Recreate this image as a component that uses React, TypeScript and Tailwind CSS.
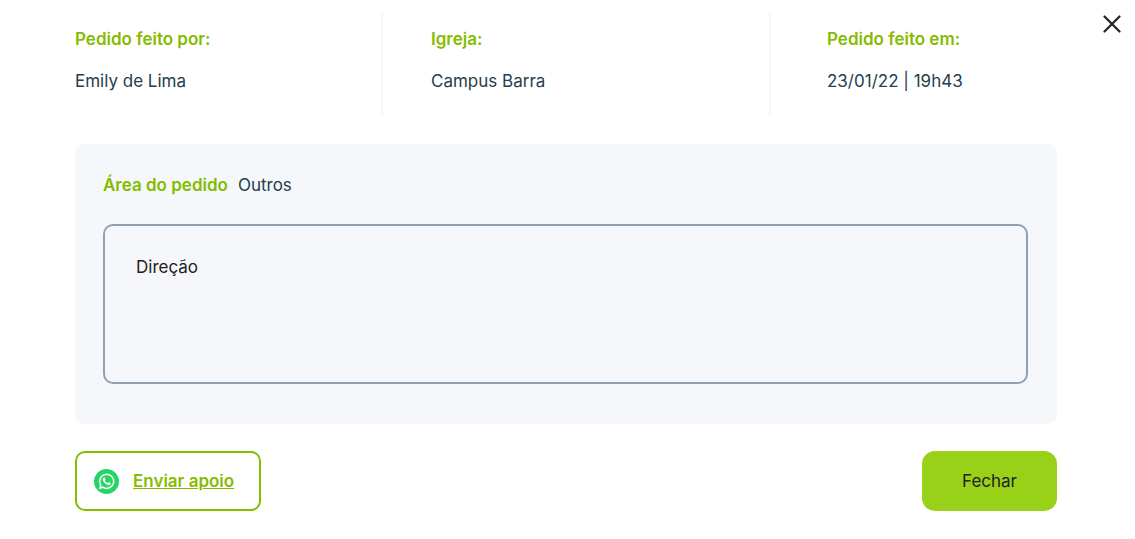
import React, { useState } from 'react';

interface Detail {
  label: string;
  value: string;
}

const DETAILS: Detail[] = [
  { label: 'Pedido feito por:', value: 'Emily de Lima' },
  { label: 'Igreja:', value: 'Campus Barra' },
  { label: 'Pedido feito em:', value: '23/01/22 | 19h43' }
];

const CELL_STYLES = [
  'border-r-2 border-[#f5f7fb]',
  'border-r-2 border-[#f5f7fb] pl-12',
  'pl-14'
];

function WhatsAppIcon() {
  return (
    <svg viewBox="0 0 25 25" className="w-[25px] h-[25px] shrink-0" aria-hidden="true">
      <circle cx="12.5" cy="12.5" r="12.5" fill="#25d366" />
      <g transform="translate(5 4.7) scale(0.64)">
        <path
          fill="#fff"
          stroke="#fff"
          strokeWidth="0.4"
          d="M17.472 14.382c-.297-.149-1.758-.867-2.03-.967-.273-.099-.471-.148-.67.15-.197.297-.767.966-.94 1.164-.173.199-.347.223-.644.075-.297-.15-1.255-.463-2.39-1.475-.883-.788-1.48-1.761-1.653-2.059-.173-.297-.018-.458.13-.606.134-.133.298-.347.446-.52.149-.174.198-.298.298-.497.099-.198.05-.371-.025-.52-.075-.149-.669-1.612-.916-2.207-.242-.579-.487-.5-.669-.51-.173-.008-.371-.01-.57-.01-.198 0-.52.074-.792.372-.272.297-1.04 1.016-1.04 2.479 0 1.462 1.065 2.875 1.213 3.074.149.198 2.096 3.2 5.077 4.487.709.306 1.262.489 1.694.625.712.227 1.36.195 1.871.118.571-.085 1.758-.719 2.006-1.413.248-.694.248-1.289.173-1.413-.074-.124-.272-.198-.57-.347m-5.421 7.403h-.004a9.87 9.87 0 01-5.031-1.378l-.361-.214-3.741.982.998-3.648-.235-.374a9.86 9.86 0 01-1.51-5.26c.001-5.45 4.436-9.884 9.888-9.884 2.64 0 5.122 1.03 6.988 2.898a9.825 9.825 0 012.893 6.994c-.003 5.45-4.437 9.884-9.885 9.884m8.413-18.297A11.815 11.815 0 0012.05 0C5.495 0 .16 5.335.157 11.892c0 2.096.547 4.142 1.588 5.945L.057 24l6.305-1.654a11.882 11.882 0 005.683 1.448h.005c6.554 0 11.89-5.335 11.893-11.893a11.821 11.821 0 00-3.48-8.413z"
        />
      </g>
    </svg>
  );
}

export default function App() {
  const [open, setOpen] = useState(true);

  if (!open) return null;

  return (
    <div
      role="dialog"
      aria-label="Pedido"
      className="relative bg-white pt-3 pb-7 pl-[75px] pr-[78px] font-['Inter',sans-serif] text-[17px] leading-6 text-[#263d4c]"
    >
      <button
        onClick={() => setOpen(false)}
        aria-label="Fechar janela"
        className="absolute top-3 right-[11px] w-6 h-6 flex items-center justify-center text-[#222]"
      >
        <svg viewBox="0 0 18 18" className="w-[18px] h-[18px]" fill="none" stroke="currentColor" strokeWidth="2.2" strokeLinecap="round">
          <path d="M1.5 1.5l15 15M16.5 1.5l-15 15" />
        </svg>
      </button>

      <dl className="grid grid-cols-[308fr_388fr_286fr]">
        {DETAILS.map((detail, index) => (
          <div key={detail.label} className={`pt-[15px] pb-[23px] ${CELL_STYLES[index]}`}>
            <dt className="font-semibold text-[#86bc00]">{detail.label}</dt>
            <dd className="mt-[18px]">{detail.value}</dd>
          </div>
        ))}
      </dl>

      <section className="mt-7 rounded-[10px] bg-[#f5f7fb] pl-7 pr-[29px] pt-[29px] pb-10">
        <div className="flex gap-2.5">
          <label htmlFor="pedido" className="font-semibold text-[#86bc00]">Área do pedido</label>
          <span>Outros</span>
        </div>
        <textarea
          id="pedido"
          readOnly
          defaultValue="Direção"
          className="mt-[27px] block w-full h-40 resize-none rounded-[10px] border-2 border-[#91a1b0] bg-[#f5f7fb] px-[31px] py-[29px] text-[#222] outline-none"
        />
      </section>

      <div className="mt-[27px] flex items-center justify-between">
        <a
          href="#apoio"
          className="flex h-[60px] items-center gap-3.5 rounded-[10px] border-2 border-[#86bc00] pl-[17px] pr-[25px] font-semibold text-[#86bc00] underline"
        >
          <WhatsAppIcon />
          Enviar apoio
        </a>
        <button
          onClick={() => setOpen(false)}
          className="h-[60px] rounded-[13px] bg-[#99d018] px-10 text-[#222]"
        >
          Fechar
        </button>
      </div>
    </div>
  );
}
